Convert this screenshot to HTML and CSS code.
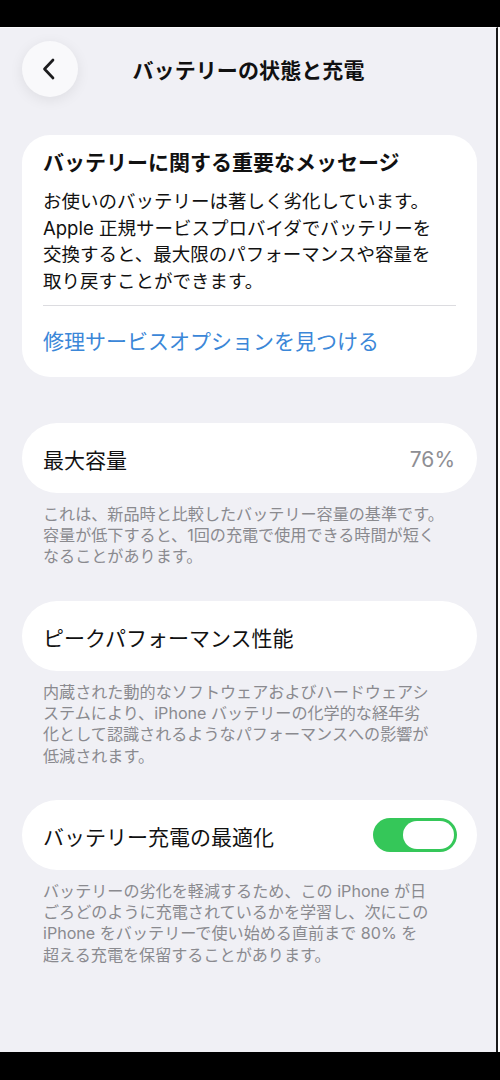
FILE: index.html
```html
<!DOCTYPE html>
<html lang="ja">
<head>
    <meta charset="UTF-8">
    <meta name="viewport" content="width=device-width, initial-scale=1.0">
    <title>バッテリーの状態と充電</title>
    <link rel="stylesheet" href="styles.css">
</head>
<body>
    <div class="top-bar"></div>

    <main class="screen">
        <!-- Navigation -->
        <header class="nav">
            <button class="back" aria-label="戻る">
                <svg width="18" height="24" viewBox="0 0 18 24">
                    <path d="M13 3 L4.5 12 L13 21" fill="none" stroke="#1c1c1e" stroke-width="2.7" stroke-linecap="round" stroke-linejoin="round"/>
                </svg>
            </button>
            <h1 class="title">バッテリーの状態と充電</h1>
        </header>

        <!-- Important message -->
        <section class="card message">
            <h2 class="message-title">バッテリーに関する重要なメッセージ</h2>
            <p class="message-body">
                お使いのバッテリーは著しく劣化しています。<br>
                Apple 正規サービスプロバイダでバッテリーを<br>
                交換すると、最大限のパフォーマンスや容量を<br>
                取り戻すことができます。
            </p>
            <div class="divider"></div>
            <a class="link" href="#">修理サービスオプションを見つける</a>
        </section>

        <!-- Maximum capacity -->
        <section class="group first">
            <div class="card row">
                <span class="label">最大容量</span>
                <span class="value">76%</span>
            </div>
            <p class="note">
                これは、新品時と比較したバッテリー容量の基準です。<br>
                容量が低下すると、1回の充電で使用できる時間が短く<br>
                なることがあります。
            </p>
        </section>

        <!-- Peak performance -->
        <section class="group">
            <div class="card row">
                <span class="label">ピークパフォーマンス性能</span>
            </div>
            <p class="note">
                内蔵された動的なソフトウェアおよびハードウェアシ<br>
                ステムにより、iPhone バッテリーの化学的な経年劣<br>
                化として認識されるようなパフォーマンスへの影響が<br>
                低減されます。
            </p>
        </section>

        <!-- Optimized charging -->
        <section class="group">
            <div class="card row">
                <span class="label">バッテリー充電の最適化</span>
                <span class="toggle on"><span class="knob"></span></span>
            </div>
            <p class="note">
                バッテリーの劣化を軽減するため、この iPhone が日<br>
                ごろどのように充電されているかを学習し、次にこの<br>
                iPhone をバッテリーで使い始める直前まで 80% を<br>
                超える充電を保留することがあります。
            </p>
        </section>
    </main>

    <div class="bottom-bar"></div>
</body>
</html>
```

FILE: styles.css
```css
/* Overall page */
* {
    box-sizing: border-box;
}

body {
    margin: 0;
    width: 500px;
    height: 1080px;
    display: flex;
    flex-direction: column;
    background-color: #ffffff;
    font-family: "Inter", "Noto Sans CJK JP", sans-serif;
    color: #111111;
}

.top-bar {
    height: 27px;
    background-color: #000000;
    flex-shrink: 0;
}

.bottom-bar {
    height: 28px;
    background-color: #000000;
    flex-shrink: 0;
}

/* Screen area */
.screen {
    flex: 1;
    width: 498px;
    background-color: #f0f0f5;
    border-top: 1px solid #fbfbfd;
    border-right: 2px solid #1a1a1a;
    padding: 13px 19px 0 22px;
}

/* Navigation */
.nav {
    display: grid;
    grid-template-columns: 56px 1fr 56px;
    align-items: center;
    height: 56px;
    margin-right: 2px;
}

.back {
    width: 56px;
    height: 56px;
    border-radius: 50%;
    border: none;
    background-color: #f9f9fb;
    box-shadow: 0 3px 14px rgba(0, 0, 0, 0.08);
    display: flex;
    align-items: center;
    justify-content: center;
    padding: 0 3px 0 0;
}

.title {
    margin: 0;
    text-align: center;
    font-size: 21px;
    font-weight: 700;
    letter-spacing: 0.1px;
}

/* Cards */
.card {
    background-color: #ffffff;
    border-radius: 28px;
}

.message {
    margin-top: 38px;
    padding: 14px 21px 21px 21px;
}

.message-title {
    margin: 0;
    font-size: 21px;
    line-height: 28px;
    font-weight: 700;
}

.message-body {
    margin: 11px 0 0 0;
    font-size: 18.5px;
    line-height: 26.7px;
    white-space: nowrap;
}

.divider {
    height: 1px;
    background-color: #dcdce0;
    margin-top: 10px;
}

.link {
    display: block;
    margin-top: 22px;
    font-size: 21px;
    line-height: 28px;
    color: #3b87d8;
    text-decoration: none;
}

/* Groups with a row and a note */
.group {
    margin-top: 33px;
}

.group.first {
    margin-top: 46px;
}

.row {
    height: 70px;
    border-radius: 35px;
    display: flex;
    align-items: center;
    justify-content: space-between;
    padding: 0 20px 0 21px;
}

.label {
    font-size: 21px;
    padding-top: 3px;
}

.value {
    font-size: 21px;
    color: #8e8e93;
    padding: 3px 2px 0 0;
}

.note {
    margin: 0;
    padding: 11px 21px 0 21px;
    font-size: 16.1px;
    line-height: 21.3px;
    color: #8a8a8f;
    white-space: nowrap;
}

/* Toggle switch */
.toggle {
    width: 84px;
    height: 34px;
    border-radius: 17px;
    background-color: #e5e5ea;
    display: flex;
    align-items: center;
    padding: 0 3px;
}

.toggle.on {
    background-color: #35c759;
    justify-content: flex-end;
}

.knob {
    width: 51px;
    height: 28px;
    border-radius: 14px;
    background-color: #ffffff;
}
```
